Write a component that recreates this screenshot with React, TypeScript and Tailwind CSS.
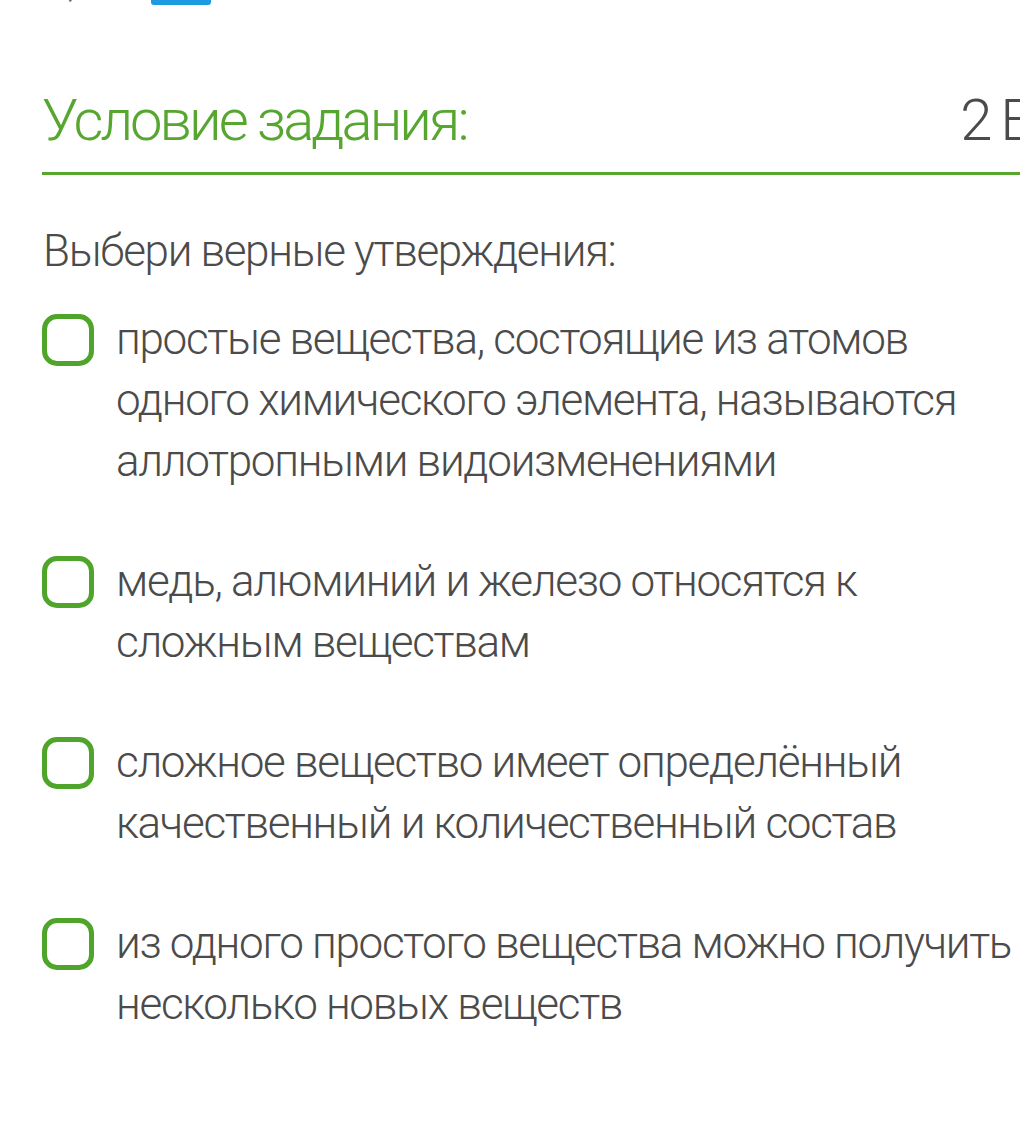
import * as React from "react";

const items = [
  "простые вещества, состоящие из атомов одного химического элемента, называются аллотропными видоизменениями",
  "медь, алюминий и железо относятся к сложным веществам",
  "сложное вещество имеет определённый качественный и количественный состав",
  "из одного простого вещества можно получить несколько новых веществ",
];

function Checkbox() {
  return (
    <span className="mt-[5px] block h-[52px] w-[52px] shrink-0 rounded-[15px] border-[5px] border-[#4ea52a] bg-white" />
  );
}

export default function App() {
  return (
    <div className="h-[1135px] w-[1020px] overflow-hidden bg-white font-['Roboto',sans-serif] font-light text-[#4b4b4b]">
      <div className="flex h-[6px] items-end gap-[45px] overflow-hidden pl-[46px]">
        <span className="text-[40px] leading-[40px] text-[#555]">3/9</span>
        <span className="mb-[1px] block h-[5px] w-[60px] rounded-b-[3px] bg-[#1e9be0]" />
      </div>

      <div className="ml-[42px] mt-[84px] flex items-end justify-between border-b-[3px] border-[#56a630] pb-[22px]">
        <h1 className="text-[58px] leading-[60px] tracking-[-3px] text-[#56a630]">Условие задания:</h1>
        <span className="-mr-[14px] whitespace-nowrap text-[58px] leading-[60px] tracking-[-3px] text-[#4b4b4b]">2 Б</span>
      </div>

      <p className="ml-[43px] mt-[46px] text-[44px] leading-[61px] tracking-[-1.35px]">Выбери верные утверждения:</p>

      <div className="ml-[42px] mt-[27px] flex flex-col gap-[59px]">
        {items.map((t) => (
          <div key={t} className="flex items-start gap-[22px]">
            <Checkbox />
            <p className="w-[900px] text-[44px] leading-[61px] tracking-[-1.3px]">{t}</p>
          </div>
        ))}
      </div>
    </div>
  );
}
